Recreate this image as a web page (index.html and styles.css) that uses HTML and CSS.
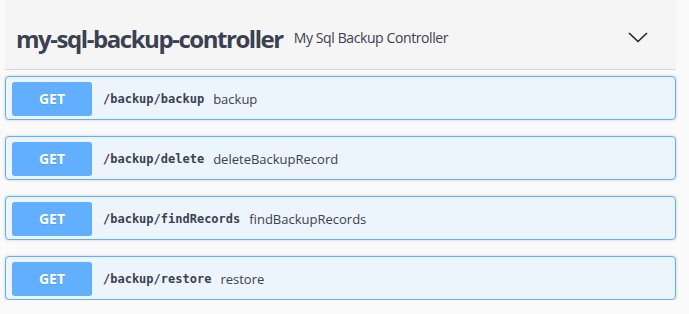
FILE: index.html
```html
<!DOCTYPE html>
<html lang="en">
<head>
    <meta charset="UTF-8">
    <title>my-sql-backup-controller</title>
    <link rel="stylesheet" href="styles.css">
</head>
<body>
    <div class="tag-section">
        <div class="tag-header">
            <span class="tag-name">my-sql-backup-controller</span>
            <span class="tag-desc">My Sql Backup Controller</span>
            <svg class="arrow" width="20" height="20" viewBox="0 0 20 20">
                <path d="M1 6 L10 14.5 L19 6" fill="none" stroke="#222" stroke-width="1.6"/>
            </svg>
        </div>
        <div class="operations">
            <div class="opblock">
                <span class="method">GET</span>
                <span class="path">/backup/backup</span>
                <span class="summary">backup</span>
            </div>
            <div class="opblock">
                <span class="method">GET</span>
                <span class="path">/backup/delete</span>
                <span class="summary">deleteBackupRecord</span>
            </div>
            <div class="opblock">
                <span class="method">GET</span>
                <span class="path">/backup/findRecords</span>
                <span class="summary">findBackupRecords</span>
            </div>
            <div class="opblock">
                <span class="method">GET</span>
                <span class="path">/backup/restore</span>
                <span class="summary">restore</span>
            </div>
        </div>
    </div>
</body>
</html>
```

FILE: styles.css
```css
body {
    margin: 0;
    background-color: #fafafa;
    font-family: "Open Sans", sans-serif;
    color: #3b4151;
}

.tag-section {
    width: 671px;
    margin-left: 5px;
}

.tag-header {
    display: flex;
    align-items: center;
    height: 70px;
    padding: 0 28px 0 11px;
    background-color: #f5f5f5;
    border-bottom: 1px solid #d6d6d9;
    box-sizing: border-box;
}

.tag-name {
    font-size: 24px;
    font-weight: 700;
    letter-spacing: -1.45px;
    padding-top: 8px;
}

.tag-desc {
    font-size: 14px;
    margin-left: 11px;
    padding-top: 5px;
    letter-spacing: -0.4px;
    flex: 1;
}

.arrow {
    margin-top: 4px;
}

.operations {
    display: flex;
    flex-direction: column;
    gap: 16px;
    padding-top: 6px;
}

.opblock {
    display: flex;
    align-items: center;
    height: 44px;
    padding: 1px 6px 0;
    box-sizing: border-box;
    background-color: #ecf4fc;
    border: 1px solid #61affe;
    border-radius: 4px;
    box-shadow: 0 0 3px rgba(0, 0, 0, 0.19);
}

.method {
    width: 80px;
    height: 34px;
    line-height: 34px;
    text-align: center;
    background-color: #61affe;
    color: #ffffff;
    font-size: 14px;
    font-weight: 700;
    border-radius: 3px;
    text-shadow: 0 1px 0 rgba(0, 0, 0, 0.1);
}

.path {
    font-family: "DejaVu Sans Mono", monospace;
    font-size: 12px;
    font-weight: 600;
    margin-left: 11px;
}

.summary {
    font-size: 13px;
    margin-left: 9px;
}
```
